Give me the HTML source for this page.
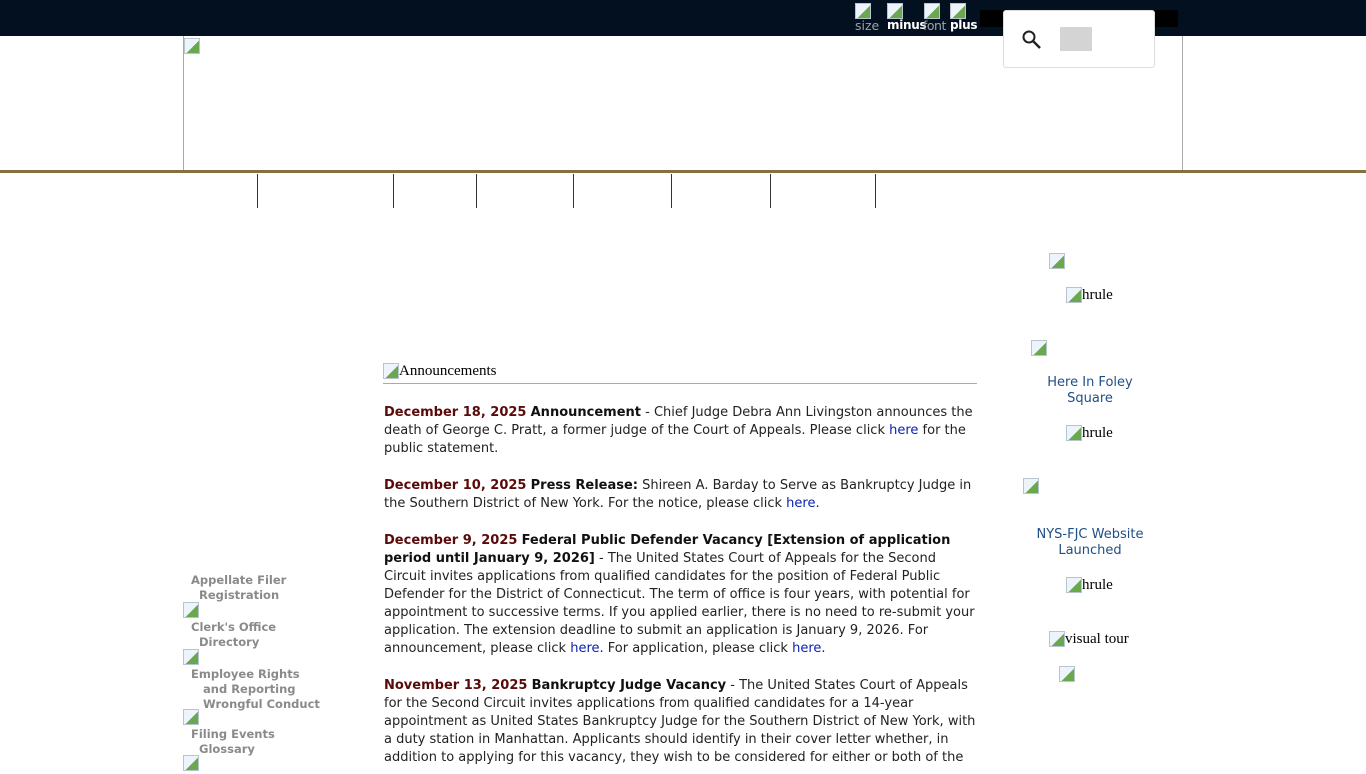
<!DOCTYPE html>
<html><head><meta charset="utf-8"><style>
*{margin:0;padding:0;box-sizing:border-box}
body{width:1366px;height:768px;overflow:hidden;background:#fff;position:relative;font-family:"DejaVu Sans","Liberation Sans",sans-serif}
.a{position:absolute}
.bi{display:inline-block;width:16px;height:16px;vertical-align:top;border:1px solid #b8c4d0;background:linear-gradient(135deg,#eef4fb 55%,#6aa84f 56%);}
.top{left:0;top:0;width:1366px;height:36px;background:#03101f}
.tb{color:#fff;font-size:12px;font-weight:bold;letter-spacing:-0.3px}
.tg{color:#9aa3ad;font-size:12.5px}
.body{font-size:13px;line-height:18px;color:#222;white-space:nowrap}
.d{color:#5a0a0a;font-weight:bold}
.t{color:#111;font-weight:bold}
a{color:#0a22b0;text-decoration:none}
.side{font-size:11.5px;font-weight:bold;color:#8a8a8a;line-height:15px;white-space:nowrap}
.rl{color:#1f4f86;font-size:13px;text-align:center;line-height:16px;width:160px}
.ser{font-family:"Liberation Serif",serif;font-size:15px;color:#000}
.vl{position:absolute;top:174px;width:1px;height:34px;background:#333}
</style></head><body>
<div class="a top"></div>
<div class="a" style="left:980px;top:10px;width:198px;height:17px;background:#000"></div>
<div class="a" style="left:855px;top:3px"><span class="bi"></span></div>
<div class="a tg" style="left:855px;top:18px">size</div>
<div class="a" style="left:887px;top:3px"><span class="bi"></span></div>
<div class="a tb" style="left:887px;top:18px">minus</div>
<div class="a" style="left:924px;top:3px"><span class="bi"></span></div>
<div class="a tg" style="left:923px;top:18px;letter-spacing:-0.5px">font</div>
<div class="a" style="left:950px;top:3px"><span class="bi"></span></div>
<div class="a tb" style="left:950px;top:18px">plus</div>
<div class="a" style="left:183px;top:36px;width:1000px;height:135px;border-left:1px solid #aaa;border-right:1px solid #aaa;background:#fff"></div>
<div class="a" style="left:184px;top:38px"><span class="bi"></span></div>
<div class="a" style="left:1003px;top:10px;width:152px;height:58px;background:#fff;border:1px solid #ddd;border-radius:3px"></div>
<svg class="a" style="left:1021px;top:29px" width="22" height="22" viewBox="0 0 22 22"><circle cx="8" cy="8" r="5.5" fill="none" stroke="#222" stroke-width="2"/><line x1="12" y1="12" x2="19" y2="19" stroke="#222" stroke-width="2.5"/></svg>
<div class="a" style="left:1060px;top:27px;width:32px;height:24px;background:#d4d4d4"></div>
<div class="a" style="left:0;top:170px;width:1366px;height:3px;background:#86703f"></div>
<div class="vl" style="left:257px"></div><div class="vl" style="left:393px"></div><div class="vl" style="left:476px"></div><div class="vl" style="left:573px"></div><div class="vl" style="left:671px"></div><div class="vl" style="left:770px"></div><div class="vl" style="left:875px"></div>

<div class="a ser" style="left:383px;top:363px"><span class="bi"></span>Announcements</div>
<div class="a" style="left:383px;top:383px;width:594px;height:1px;background:#aaa"></div>

<div class="a body" style="left:384px;top:404px"><span class="d">December 18, 2025</span> <span class="t">Announcement</span> - Chief Judge Debra Ann Livingston announces the<br>death of George C. Pratt, a former judge of the Court of Appeals. Please click <a>here</a> for the<br>public statement.</div>
<div class="a body" style="left:384px;top:477px"><span class="d">December 10, 2025</span> <span class="t">Press Release:</span> Shireen A. Barday to Serve as Bankruptcy Judge in<br>the Southern District of New York. For the notice, please click <a>here</a>.</div>
<div class="a body" style="left:384px;top:532px"><span class="d">December 9, 2025</span> <span class="t">Federal Public Defender Vacancy [Extension of application<br>period until January 9, 2026]</span> - The United States Court of Appeals for the Second<br>Circuit invites applications from qualified candidates for the position of Federal Public<br>Defender for the District of Connecticut. The term of office is four years, with potential for<br>appointment to successive terms. If you applied earlier, there is no need to re-submit your<br>application. The extension deadline to submit an application is January 9, 2026. For<br>announcement, please click <a>here</a>. For application, please click <a>here</a>.</div>
<div class="a body" style="left:384px;top:677px"><span class="d">November 13, 2025</span> <span class="t">Bankruptcy Judge Vacancy</span> - The United States Court of Appeals<br>for the Second Circuit invites applications from qualified candidates for a 14-year<br>appointment as United States Bankruptcy Judge for the Southern District of New York, with<br>a duty station in Manhattan. Applicants should identify in their cover letter whether, in<br>addition to applying for this vacancy, they wish to be considered for either or both of the</div>

<div class="a side" style="left:191px;top:573px">Appellate Filer<br>&nbsp;&nbsp;Registration</div>
<div class="a" style="left:183px;top:602px"><span class="bi"></span></div>
<div class="a side" style="left:191px;top:620px">Clerk's Office<br>&nbsp;&nbsp;Directory</div>
<div class="a" style="left:183px;top:649px"><span class="bi"></span></div>
<div class="a side" style="left:191px;top:667px">Employee Rights<br>&nbsp;&nbsp;&nbsp;and Reporting<br>&nbsp;&nbsp;&nbsp;Wrongful Conduct</div>
<div class="a" style="left:183px;top:709px"><span class="bi"></span></div>
<div class="a side" style="left:191px;top:727px">Filing Events<br>&nbsp;&nbsp;Glossary</div>
<div class="a" style="left:183px;top:755px"><span class="bi"></span></div>

<div class="a" style="left:1049px;top:253px"><span class="bi"></span></div>
<div class="a ser" style="left:1066px;top:287px"><span class="bi"></span>hrule</div>
<div class="a" style="left:1031px;top:340px"><span class="bi"></span></div>
<div class="a rl" style="left:1010px;top:375px">Here In Foley<br>Square</div>
<div class="a ser" style="left:1066px;top:425px"><span class="bi"></span>hrule</div>
<div class="a" style="left:1023px;top:478px"><span class="bi"></span></div>
<div class="a rl" style="left:1010px;top:527px">NYS-FJC Website<br>Launched</div>
<div class="a ser" style="left:1066px;top:577px"><span class="bi"></span>hrule</div>
<div class="a ser" style="left:1049px;top:631px"><span class="bi"></span>visual tour</div>
<div class="a" style="left:1059px;top:666px"><span class="bi"></span></div>
</body></html>
